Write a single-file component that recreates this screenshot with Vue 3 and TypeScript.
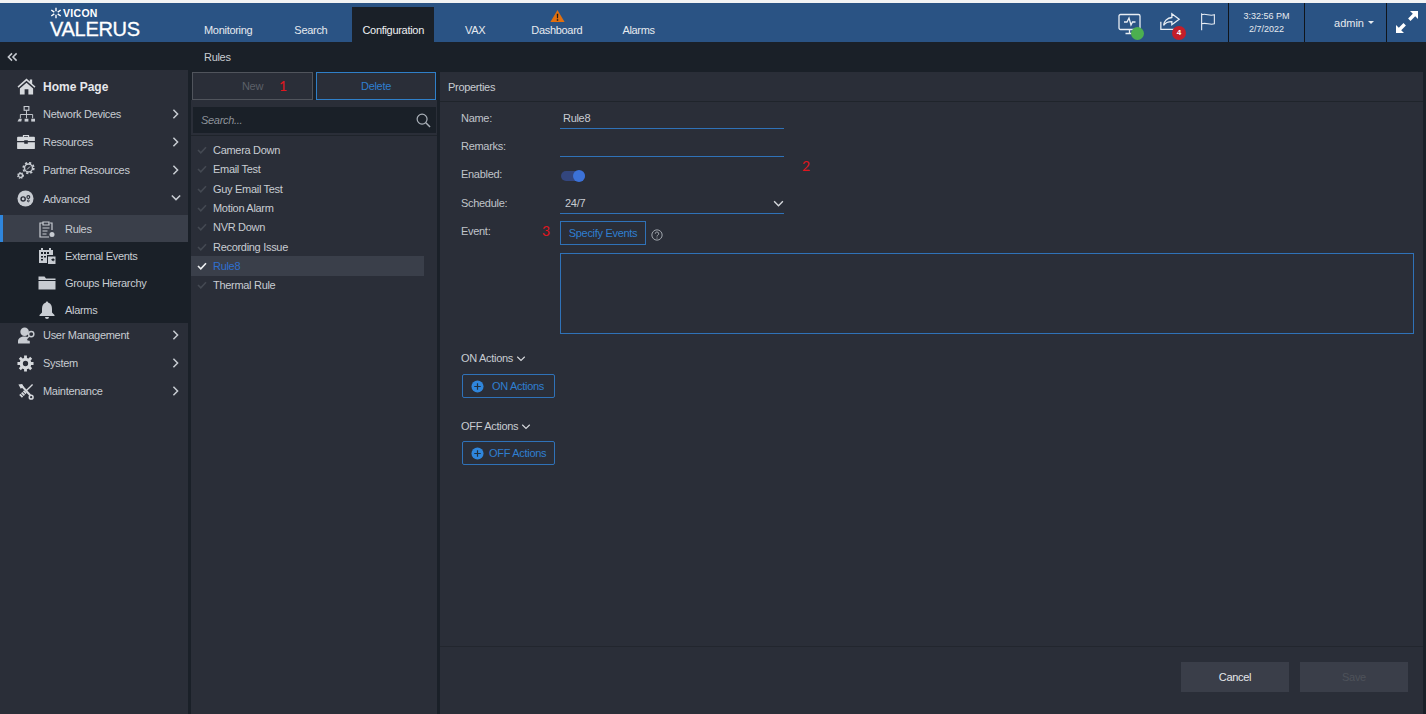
<script setup lang="ts">
const navItems = [
  { label: 'Monitoring', cls: 'n1' },
  { label: 'Search', cls: 'n2' },
  { label: 'Configuration', cls: 'n3 active' },
  { label: 'VAX', cls: 'n4' },
  { label: 'Dashboard', cls: 'n5 warn' },
  { label: 'Alarms', cls: 'n6' },
]
const rules = ['Camera Down', 'Email Test', 'Guy Email Test', 'Motion Alarm', 'NVR Down', 'Recording Issue', 'Rule8', 'Thermal Rule']
</script>

<template>
  <div class="app">
    <header class="topbar">
      <div class="logo">
        <div class="logo-top">
          <svg class="logo-mark" viewBox="0 0 14 14" width="12" height="12">
            <path d="M7 1v4M7 9v4M1.500 3.500 5 6M12.500 3.500 9 6M1.500 10.500 5 8M12.500 10.500 9 8" stroke="#fff" stroke-width="1.600" fill="none" />
          </svg>
          <span>VICON</span>
        </div>
        <div class="logo-name">VALERUS</div>
      </div>
      <nav class="nav">
        <div v-for="n in navItems" :key="n.label" class="nav-item" :class="n.cls">
          <svg v-if="n.label === 'Dashboard'" class="warn-icon" viewBox="0 0 16 14" width="15" height="14">
            <path d="M8 0.500 15.600 13.500H0.400Z" fill="#e2700f" />
            <path d="M7.200 4.500h1.600l-.2 5H7.400ZM7.200 10.500h1.600v1.600H7.200Z" fill="#1b1b1b" />
          </svg>
          {{ n.label }}
        </div>
      </nav>
      <div class="top-right">
        <div class="status-icons">
          <div class="ti ti-mon">
            <svg viewBox="0 0 24 24" width="24" height="24" fill="none" stroke="#e8edf3" stroke-width="1.300">
              <rect x="1" y="1.500" width="21" height="15" rx="1.500" />
              <path d="M6 9h3l2-4 2 7 1.500-3h3M11.500 16.500v4M7.500 20.500h8" />
            </svg>
            <span class="dot green"></span>
          </div>
          <div class="ti ti-share">
            <svg viewBox="0 0 24 24" width="22" height="22" fill="none" stroke="#e8edf3" stroke-width="1.400">
              <path d="M14 2 22 8l-8 6v-3.500c-4 0-7 1-9 4 .5-4.500 4-8 9-8.500Z" />
              <path d="M2 10.500V19h15" />
            </svg>
            <span class="dot red">4</span>
          </div>
          <svg class="ti-flag" viewBox="0 0 20 22" width="20" height="20" fill="none" stroke="#e8edf3" stroke-width="1.200">
            <path d="M3 1.500V20M3 3c5-2 8 2 14 0v10c-5 2-9-2-14 0" />
          </svg>
        </div>
        <div class="clock"><span>3:32:56 PM</span><span>2/7/2022</span></div>
        <div class="user">admin <i class="caret"></i></div>
        <div class="expand">
          <svg viewBox="0 0 24 22" width="24" height="22" fill="#fff">
            <path d="M15 0h8v8l-2.800-2.800-4.700 4.700-2.400-2.400 4.700-4.700ZM9 22H1v-8l2.800 2.800 4.700-4.700 2.400 2.400-4.700 4.700Z" />
          </svg>
        </div>
      </div>
    </header>

    <div class="subbar">
      <svg class="collapse" viewBox="0 0 12 10" width="11" height="10" fill="none" stroke="#c8ccd2" stroke-width="1.700">
        <path d="M5.500 1 1.500 5l4 4M10.500 1l-4 4 4 4" />
      </svg>
      <span class="crumb">Rules</span>
    </div>

    <main class="body">
      <aside class="sidebar">
        <div class="side-row home">
          <svg class="si" viewBox="0 0 20 18" width="19" height="17" fill="#d6d9dd">
            <path d="M10 0.500 0.500 9l1 1.300L10 3l8.500 7.300 1-1.300L16 6V1.500h-2.500v2.300ZM3 11V17.500H8V12h4V17.500h5V11L10 5Z" />
          </svg>
          <span>Home Page</span>
        </div>
        <div class="side-row">
          <svg class="si" viewBox="0 0 20 18" width="19" height="17" fill="none" stroke="#c8ccd2" stroke-width="1">
            <rect x="7.500" y="0.500" width="5" height="4" stroke-width="1.200" />
            <path d="M10 4.500V9M3.500 13V9h13v4M10 9v4" />
            <path d="M0.500 16.500l1.500-3h3l-.5 3Z" fill="#c8ccd2" stroke="none" />
            <rect x="8" y="13.500" width="4" height="3" fill="#c8ccd2" stroke="none" />
            <rect x="15" y="13.500" width="4" height="3" fill="#c8ccd2" stroke="none" />
          </svg>
          <span>Network Devices</span>
          <svg class="chev" viewBox="0 0 8 12" width="7" height="10" fill="none" stroke="#c8ccd2" stroke-width="1.800"><path d="M1.500 1l5 5-5 5" /></svg>
        </div>
        <div class="side-row">
          <svg class="si" viewBox="0 0 20 18" width="18" height="16" fill="#d6d9dd">
            <path d="M6.500 3V1h7v2H19a1 1 0 0 1 1 1v4H12V7H8v1H0V4a1 1 0 0 1 1-1Zm1.300 0h4.400V2.200H7.800ZM0 9.200h8V11h4V9.200h8V16a1 1 0 0 1-1 1H1a1 1 0 0 1-1-1Z" />
          </svg>
          <span>Resources</span>
          <svg class="chev" viewBox="0 0 8 12" width="7" height="10" fill="none" stroke="#c8ccd2" stroke-width="1.800"><path d="M1.500 1l5 5-5 5" /></svg>
        </div>
        <div class="side-row">
          <svg class="si" viewBox="0 0 18 17" width="18" height="17" fill="none" stroke="#c8ccd2">
            <circle cx="11.500" cy="6" r="4" stroke-width="1.500" />
            <circle cx="11.500" cy="6" r="5.300" stroke-width="1.700" stroke-dasharray="2.200 1.950" />
            <path d="M10 7.500 13 4.500" stroke-width="1" />
            <circle cx="3.500" cy="13.500" r="2" stroke-width="1.300" />
            <circle cx="3.500" cy="13.500" r="2.900" stroke-width="1.100" stroke-dasharray="1.300 1.120" />
          </svg>
          <span>Partner Resources</span>
          <svg class="chev" viewBox="0 0 8 12" width="7" height="10" fill="none" stroke="#c8ccd2" stroke-width="1.800"><path d="M1.500 1l5 5-5 5" /></svg>
        </div>
        <div class="side-row adv">
          <svg class="si" viewBox="0 0 18 18" width="17" height="17">
            <circle cx="9" cy="9" r="8.500" fill="#c8ccd2" />
            <circle cx="6.500" cy="9.500" r="2.200" fill="none" stroke="#2a2e38" stroke-width="1.500" />
            <circle cx="12" cy="7.500" r="1.500" fill="none" stroke="#2a2e38" stroke-width="1.200" />
            <circle cx="12" cy="11.500" r="1" fill="none" stroke="#2a2e38" stroke-width="1" />
          </svg>
          <span>Advanced</span>
          <svg class="chev down" viewBox="0 0 12 8" width="10" height="7" fill="none" stroke="#c8ccd2" stroke-width="1.800"><path d="M1 1.500l5 5 5-5" /></svg>
        </div>
        <div class="submenu">
          <div class="sub-row selected">
            <svg class="ssi" viewBox="0 0 18 18" width="18" height="18" fill="none" stroke="#c8ccd2" stroke-width="1.200">
              <path d="M5 3H2v14h9M12 3h2v7M5 2h6v3H5ZM4.500 8h7M4.500 11h5M4.500 14h4" />
              <circle cx="14" cy="14.500" r="2.500" fill="#c8ccd2" stroke="none" />
            </svg>
            <span>Rules</span>
          </div>
          <div class="sub-row">
            <svg class="ssi" viewBox="0 0 18 18" width="18" height="18" fill="#c8ccd2">
              <path d="M1 3h2V1h2v2h6V1h2v2h2v5H9v8H1ZM3 9v1.500h2V9Zm0 3v1.500h2V12Zm3-3v1.500h2V9Zm-3-4v2h2V5Zm3 0v2h2V5Zm3 0v2h2V5Z" fill-rule="evenodd" />
              <path d="M10 9.500h7.500V17H10Zm3 3.300 2.500-1.800v1h1v1.500h-1v1Z" fill-rule="evenodd" />
            </svg>
            <span>External Events</span>
          </div>
          <div class="sub-row">
            <svg class="ssi" viewBox="0 0 18 16" width="18" height="16" fill="#c8ccd2">
              <path d="M0.500 1.500h6l1.500 2h9.500v1.500H0.500ZM0.500 6h17v8.500H0.500Z" />
            </svg>
            <span>Groups Hierarchy</span>
          </div>
          <div class="sub-row">
            <svg class="ssi" viewBox="0 0 18 18" width="18" height="18" fill="#c8ccd2">
              <path d="M9 0.500c.8 0 1.300.6 1.300 1.300C13 2.500 14 5 14 8v3.500l2.500 2.500v1h-15v-1L4 11.500V8c0-3 1-5.500 3.700-6.200C7.700 1.100 8.200.5 9 .5ZM7 16h4a2 2 0 0 1-4 0Z" />
            </svg>
            <span>Alarms</span>
          </div>
        </div>
        <div class="side-row user-row">
          <svg class="si" viewBox="0 0 20 18" width="19" height="17" fill="#c8ccd2">
            <circle cx="8" cy="5" r="4.500" />
            <path d="M1 17.500V15c0-3 3-5 7-5 1.500 0 2.500.3 3.500.8L9.500 13l2 2 1-1 1 1v2.500Z" />
            <circle cx="15" cy="7.500" r="2.800" fill="#2a2e38" stroke="#c8ccd2" stroke-width="1.500" />
            <path d="M13 9.500 9.500 13l1.500 1.500" fill="none" stroke="#c8ccd2" stroke-width="1.500" />
          </svg>
          <span>User Management</span>
          <svg class="chev" viewBox="0 0 8 12" width="7" height="10" fill="none" stroke="#c8ccd2" stroke-width="1.800"><path d="M1.500 1l5 5-5 5" /></svg>
        </div>
        <div class="side-row">
          <svg class="si" viewBox="0 0 18 18" width="17" height="17" fill="none" stroke="#d6d9dd">
            <circle cx="9" cy="9" r="4.500" stroke-width="3.400" />
            <path d="M9 .5v3M9 14.500v3M.5 9h3M14.500 9h3M3 3l2.200 2.200M12.800 12.800 15 15M15 3l-2.200 2.200M5.200 12.800 3 15" stroke-width="3" />
          </svg>
          <span>System</span>
          <svg class="chev" viewBox="0 0 8 12" width="7" height="10" fill="none" stroke="#c8ccd2" stroke-width="1.800"><path d="M1.500 1l5 5-5 5" /></svg>
        </div>
        <div class="side-row">
          <svg class="si" viewBox="0 0 18 18" width="17" height="17" fill="none" stroke="#d6d9dd" stroke-width="2.200">
            <path d="M4.500 2.500 14 13" />
            <path d="M1.500 1.500 5.500 1 7 4 4 6Z" fill="#d6d9dd" stroke="none" />
            <circle cx="15" cy="15" r="2" stroke-width="1.600" />
            <path d="M16.500 1.500 10 8" stroke-width="1.400" />
            <path d="M9 9 3.500 14.500" stroke-width="4" stroke-dasharray="2 .7" />
          </svg>
          <span>Maintenance</span>
          <svg class="chev" viewBox="0 0 8 12" width="7" height="10" fill="none" stroke="#c8ccd2" stroke-width="1.800"><path d="M1.500 1l5 5-5 5" /></svg>
        </div>
      </aside>

      <section class="list-panel">
        <div class="list-actions">
          <button class="btn-new">New</button>
          <button class="btn-del">Delete</button>
          <span class="mark m1">1</span>
        </div>
        <div class="search">
          <span>Search...</span>
          <svg viewBox="0 0 16 16" width="15" height="15" fill="none" stroke="#aab0b8" stroke-width="1.300">
            <circle cx="6.500" cy="6.500" r="5.300" /><path d="M10.500 10.500 15 15" stroke-width="1.600" />
          </svg>
        </div>
        <ul class="rules">
          <li v-for="r in rules" :key="r" :class="{ sel: r === 'Rule8' }">
            <svg viewBox="0 0 12 10" width="10" height="8" fill="none" stroke-width="2"><path d="M1 5l3.500 3.500L11 1.500" /></svg>
            <span>{{ r }}</span>
          </li>
        </ul>
      </section>

      <section class="props">
        <div class="props-head">Properties</div>
        <div class="form">
          <div class="frow">
            <label>Name:</label>
            <div class="line-input name">Rule8</div>
          </div>
          <div class="frow">
            <label>Remarks:</label>
            <div class="line-input"></div>
            <span class="mark m2">2</span>
          </div>
          <div class="frow">
            <label>Enabled:</label>
            <div class="switch"><i></i></div>
          </div>
          <div class="frow sched">
            <label>Schedule:</label>
            <div class="line-input select">
              <span>24/7</span>
              <svg viewBox="0 0 12 8" width="11" height="7" fill="none" stroke="#d6d9dd" stroke-width="1.600"><path d="M1 1.500l5 5 5-5" /></svg>
            </div>
          </div>
          <div class="frow event">
            <label>Event:</label>
            <span class="mark m3">3</span>
            <button class="btn-spec">Specify Events</button>
            <svg class="help" viewBox="0 0 14 14" width="12" height="12" fill="none" stroke="#a8adb4" stroke-width="1.100">
              <circle cx="7" cy="7" r="6" /><path d="M5 5.500a2 2 0 1 1 3 1.700c-.7.400-1 .8-1 1.600M7 10v1.200" />
            </svg>
          </div>
          <div class="event-box"></div>
          <div class="section-title on">ON Actions
            <svg viewBox="0 0 12 8" width="10" height="6" fill="none" stroke="#d6d9dd" stroke-width="1.500"><path d="M1 1l5 5 5-5" /></svg>
          </div>
          <button class="btn-add on-btn">
            <svg viewBox="0 0 14 14" width="13" height="13"><circle cx="7" cy="7" r="6.500" fill="#2f86dc" /><path d="M7 3.500v7M3.500 7h7" stroke="#20303f" stroke-width="1.300" /></svg>
            <span>ON Actions</span>
          </button>
          <div class="section-title off">OFF Actions
            <svg viewBox="0 0 12 8" width="10" height="6" fill="none" stroke="#d6d9dd" stroke-width="1.500"><path d="M1 1l5 5 5-5" /></svg>
          </div>
          <button class="btn-add off-btn">
            <svg viewBox="0 0 14 14" width="13" height="13"><circle cx="7" cy="7" r="6.500" fill="#2f86dc" /><path d="M7 3.500v7M3.500 7h7" stroke="#20303f" stroke-width="1.300" /></svg>
            <span>OFF Actions</span>
          </button>
        </div>
        <footer class="props-foot">
          <button class="cancel">Cancel</button>
          <button class="save">Save</button>
        </footer>
      </section>
    </main>
  </div>
</template>

<style>
html, body { margin: 0; background: #1a2028; }
</style>

<style scoped>
.app {
  width: 1426px; height: 714px; overflow: hidden; display: flex; flex-direction: column;
  background: #1a2028; color: #c8ccd2; font-family: "Liberation Sans", Arial, sans-serif; font-size: 11px; letter-spacing: -.3px;
  border-top: 3px solid #f2f3f4; box-sizing: border-box; position: relative;
}
button { font-family: inherit; font-size: 11px; letter-spacing: inherit; background: none; box-sizing: border-box; cursor: default; }

.topbar { height: 39px; flex: none; background: #2a5384; display: flex; color: #e6eaef; }
.logo { width: 194px; box-sizing: border-box; padding: 3px 0 0 50px; color: #fff; }
.logo-top { display: flex; align-items: center; font-size: 10.500px; font-weight: 700; height: 13px; gap: 1px; letter-spacing: .3px; }
.logo-name { font-size: 20px; line-height: 21px; letter-spacing: -.3px; -webkit-text-stroke: .3px #fff; }
.nav { display: flex; height: 100%; }
.nav-item { position: relative; padding: 21px 10px 0; box-sizing: border-box; line-height: 13px; white-space: nowrap; }
.nav-item.n2 { margin-left: 22px; }
.nav-item.n3 { margin-left: 15px; }
.nav-item.n4 { margin-left: 21px; }
.nav-item.n5 { margin-left: 26px; }
.nav-item.n6 { margin-left: 20px; }
.nav-item.active { background: #1a2028; margin-top: 4px; padding-top: 17px; color: #eef0f3; }
.warn-icon { position: absolute; left: 29px; top: 6px; }
.top-right { margin-left: auto; display: flex; height: 100%; }
.status-icons { display: flex; align-items: center; position: relative; width: 110px; padding-left: 0; }
.ti { position: absolute; }
.ti-mon { left: 0; top: 10px; width: 24px; height: 24px; }
.ti-share { left: 41px; top: 9px; width: 24px; height: 24px; }
.ti-flag { position: absolute; left: 80px; top: 9px; }
.dot { position: absolute; border-radius: 50%; }
.dot.green { width: 13px; height: 13px; background: #4caf50; left: 13px; top: 14px; }
.dot.red { width: 14px; height: 14px; background: #c41e2a; color: #fff; font-size: 8px; font-weight: 700; line-height: 14px; text-align: center; left: 13px; top: 14px; letter-spacing: 0; }
.clock { width: 77px; border-left: 1px solid #10151b; border-right: 1px solid #10151b; display: flex; flex-direction: column; align-items: center; justify-content: center; font-size: 9px; line-height: 13px; box-sizing: border-box; letter-spacing: 0; }
.user { width: 81px; display: flex; align-items: center; justify-content: flex-end; padding-right: 12px; box-sizing: border-box; gap: 4px; font-size: 11px; letter-spacing: 0; }
.caret { width: 0; height: 0; border-left: 3px solid transparent; border-right: 3px solid transparent; border-top: 3px solid #e6eaef; }
.expand { width: 40px; border-left: 1px solid #10151b; box-sizing: border-box; display: flex; align-items: center; justify-content: center; padding-bottom: 1px; }

.subbar { height: 28px; flex: none; display: flex; align-items: center; background: #1a2028; padding-top: 1px; box-sizing: border-box; }
.collapse { margin-left: 7px; }
.crumb { margin-left: 186px; font-size: 11px; color: #c8ccd2; }

.body { flex: 1; min-height: 0; display: flex; gap: 3px; padding-right: 3px; }

.sidebar { width: 188px; flex: none; background: #2a2e38; padding-top: 3px; box-sizing: border-box; }
.side-row { height: 28px; display: flex; align-items: center; padding-left: 17px; position: relative; }
.side-row > span { position: absolute; left: 43px; }
.side-row.home { height: 27px; }
.side-row.home span { font-size: 12px; font-weight: 700; color: #e6e8eb; letter-spacing: 0; }
.side-row.adv { height: 31px; padding-bottom: 2px; box-sizing: border-box; }
.si { flex: none; }
.chev { position: absolute; left: 172px; top: 9px; }
.chev.down { left: 171px; top: 10px; }
.submenu { background: #1a2028; height: 108px; }
.sub-row { height: 27px; display: flex; align-items: center; padding-left: 38px; position: relative; }
.sub-row span { position: absolute; left: 65px; }
.sub-row.selected { background: #3a3f4a; box-shadow: inset 3px 0 0 #2f86dc; }
.side-row.user-row { height: 26px; padding-bottom: 2px; box-sizing: border-box; }
.user-row .chev { top: 7px; }

.list-panel { width: 246px; flex: none; background: #2a2e38; position: relative; }
.list-actions { display: flex; gap: 3px; padding: 2px 1px 0; height: 30px; box-sizing: border-box; position: relative; background: #1a2028; }
.btn-new, .btn-del { width: 121px; height: 28px; }
.btn-new { border: 1px solid #50545c; background: #2a2e38; color: #5c6068; }
.btn-del { border: 1px solid #2f7fc8; background: #2a2e38; color: #2f7fd0; width: 120px; }
.search { margin: 7px 1px 0 2px; height: 26px; background: #1a2028; display: flex; align-items: center; justify-content: space-between; padding: 0 5px 0 8px; font-style: italic; color: #8d929a; }
.rules { list-style: none; margin: 2px 0 0; padding: 4.500px 0 0; border-top: 1px solid #1f242b; }
.rules li { height: 19.300px; width: 233px; display: flex; align-items: center; padding-left: 6px; box-sizing: border-box; gap: 6px; color: #c8ccd2; }
.rules li svg { stroke: #444952; }
.rules li.sel { background: #3a3f4a; color: #2f6fd0; }
.rules li.sel svg { stroke: #f0f2f4; }

.props { flex: 1; min-width: 0; background: #2a2e38; display: flex; flex-direction: column; margin-top: 2px; }
.props-head { height: 29px; line-height: 31px; padding-left: 8px; border-bottom: 1px solid #1f242b; color: #c8ccd2; flex: none; }
.form { flex: 1; padding: 2px 9px 0 21px; position: relative; }
.frow { display: flex; height: 28px; position: relative; }
.frow label { width: 99px; flex: none; padding-top: 8px; line-height: 13px; color: #c0c4ca; }
.frow.sched label { padding-top: 9px; }
.line-input { width: 224px; height: 25px; border-bottom: 1px solid #2f72b8; box-sizing: border-box; color: #c8ccd2; padding: 8px 0 0 3px; line-height: 13px; }
.select { display: flex; justify-content: space-between; align-items: flex-start; padding: 9px 0 0 5px; height: 26px; }
.select svg { margin-top: 3px; }
.switch { width: 24px; height: 10px; border-radius: 5px; background: #33467e; margin-top: 11px; margin-left: 1px; position: relative; }
.switch i { position: absolute; right: 0; top: -1px; width: 12px; height: 12px; border-radius: 50%; background: #3c72d8; }
.frow.event { height: 32px; margin-top: 5px; }
.frow.event label { padding-top: 4px; }
.btn-spec { width: 86px; height: 24px; margin-top: 0; border: 1px solid #2f72b8; color: #2f7fd0; padding: 0; }
.help { margin: 8px 0 0 5px; }
.event-box { height: 81px; border: 1px solid #2f72b8; margin-left: 99px; box-sizing: border-box; }
.section-title { display: flex; align-items: center; gap: 3px; line-height: 13px; color: #c8ccd2; }
.section-title.on { margin-top: 18px; }
.section-title.off { margin-top: 22px; }
.btn-add { display: flex; align-items: center; width: 93px; height: 24px; border: 1px solid #2f72b8; border-radius: 2px; color: #2f7fd0; margin-left: 1px; padding: 0 0 0 8px; }
.on-btn { margin-top: 9px; gap: 8px; }
.off-btn { margin-top: 8px; gap: 5px; }
.props-foot { height: 68px; flex: none; border-top: 1px solid #22262e; display: flex; justify-content: flex-end; gap: 11px; padding: 15px 15px 0 0; box-sizing: border-box; }
.cancel, .save { width: 108px; height: 30px; border: none; background: #3a3e49; }
.cancel { color: #e6e8eb; }
.save { color: #4e525a; }

.mark { position: absolute; color: #e0161e; font-family: Lato, "Liberation Sans", sans-serif; font-size: 14px; line-height: 14px; letter-spacing: 0; }
.m1 { left: 88px; top: 9px; }
.m2 { left: 341px; top: 27px; }
.m3 { left: 81px; top: 3px; }
</style>
